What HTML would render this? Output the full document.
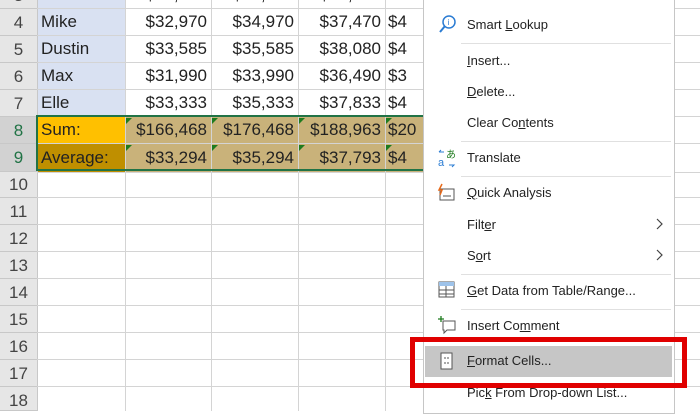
<!DOCTYPE html><html><head><style>
body{margin:0;width:700px;height:411px;overflow:hidden;background:#fff;font-family:"Liberation Sans",sans-serif;position:relative}
.a{position:absolute}
.rh{position:absolute;left:0;width:37px;background:#e6e6e6;color:#444;font-size:17px;text-align:center;border-bottom:1px solid #c8c8c8;box-sizing:border-box}
.hl{position:absolute;height:1px;background:#d4d4d4;left:37px;width:663px}
.vl{position:absolute;width:1px;background:#d4d4d4;top:0;height:411px}
.c{position:absolute;font-size:17px;color:#222;text-align:right;box-sizing:border-box;padding-right:4px;line-height:27px}
.m{position:absolute;left:467px;font-size:13px;color:#222}
.sep{position:absolute;left:461px;width:210px;height:1px;background:#e0e0e0}
.tri{position:absolute;width:0;height:0;border-top:6px solid #1e7b1e;border-right:6px solid transparent}
</style></head><body>
<div class="a" style="left:37px;top:0;width:88px;height:116px;background:#d9e1f2"></div>
<div class="a" style="left:37px;top:116px;width:88px;height:27px;background:#ffc000"></div>
<div class="a" style="left:37px;top:143px;width:88px;height:29px;background:#bf8f00"></div>
<div class="a" style="left:125px;top:116px;width:300px;height:56px;background:#c9b27a"></div>
<div class="vl" style="left:125px"></div><div class="vl" style="left:211px"></div><div class="vl" style="left:298px"></div><div class="vl" style="left:385px"></div><div class="vl" style="left:37px;background:#c8c8c8"></div>
<div class="hl" style="top:8px"></div><div class="hl" style="top:35px"></div><div class="hl" style="top:62px"></div><div class="hl" style="top:89px"></div><div class="hl" style="top:116px"></div><div class="hl" style="top:143px"></div><div class="hl" style="top:172px"></div><div class="hl" style="top:197px"></div><div class="hl" style="top:224px"></div><div class="hl" style="top:251px"></div><div class="hl" style="top:278px"></div><div class="hl" style="top:305px"></div><div class="hl" style="top:332px"></div><div class="hl" style="top:359px"></div><div class="hl" style="top:386px"></div>
<div class="rh" style="top:-18px;height:27px;line-height:27px">3</div>
<div class="rh" style="top:9px;height:27px;line-height:27px">4</div>
<div class="rh" style="top:36px;height:27px;line-height:27px">5</div>
<div class="rh" style="top:63px;height:27px;line-height:27px">6</div>
<div class="rh" style="top:90px;height:27px;line-height:27px">7</div>
<div class="rh" style="top:117px;height:27px;line-height:27px;background:#d2d2d2;color:#217346">8</div>
<div class="rh" style="top:144px;height:28px;line-height:28px;background:#d2d2d2;color:#217346">9</div>
<div class="rh" style="top:172px;height:26px;line-height:26px">10</div>
<div class="rh" style="top:198px;height:27px;line-height:27px">11</div>
<div class="rh" style="top:225px;height:27px;line-height:27px">12</div>
<div class="rh" style="top:252px;height:27px;line-height:27px">13</div>
<div class="rh" style="top:279px;height:27px;line-height:27px">14</div>
<div class="rh" style="top:306px;height:27px;line-height:27px">15</div>
<div class="rh" style="top:333px;height:27px;line-height:27px">16</div>
<div class="rh" style="top:360px;height:27px;line-height:27px">17</div>
<div class="rh" style="top:387px;height:24px;line-height:27px">18</div>
<div class="c" style="left:37px;top:-19px;width:88px;text-align:left;padding-left:4px">Will</div>
<div class="c" style="left:37px;top:8px;width:88px;text-align:left;padding-left:4px">Mike</div>
<div class="c" style="left:37px;top:35px;width:88px;text-align:left;padding-left:4px">Dustin</div>
<div class="c" style="left:37px;top:62px;width:88px;text-align:left;padding-left:4px">Max</div>
<div class="c" style="left:37px;top:89px;width:88px;text-align:left;padding-left:4px">Elle</div>
<div class="c" style="left:37px;top:116px;width:88px;text-align:left;padding-left:4px">Sum:</div>
<div class="c" style="left:37px;top:144px;width:88px;text-align:left;padding-left:4px">Average:</div>
<div class="c" style="left:125px;top:-19px;width:86px">$34,990</div><div class="c" style="left:211px;top:-19px;width:87px">$36,990</div><div class="c" style="left:298px;top:-19px;width:87px">$39,690</div>
<div class="c" style="left:125px;top:8px;width:86px">$32,970</div><div class="c" style="left:211px;top:8px;width:87px">$34,970</div><div class="c" style="left:298px;top:8px;width:87px">$37,470</div><div class="c" style="left:385px;top:8px;text-align:left;padding-left:3px">$4</div>
<div class="c" style="left:125px;top:35px;width:86px">$33,585</div><div class="c" style="left:211px;top:35px;width:87px">$35,585</div><div class="c" style="left:298px;top:35px;width:87px">$38,080</div><div class="c" style="left:385px;top:35px;text-align:left;padding-left:3px">$4</div>
<div class="c" style="left:125px;top:62px;width:86px">$31,990</div><div class="c" style="left:211px;top:62px;width:87px">$33,990</div><div class="c" style="left:298px;top:62px;width:87px">$36,490</div><div class="c" style="left:385px;top:62px;text-align:left;padding-left:3px">$3</div>
<div class="c" style="left:125px;top:89px;width:86px">$33,333</div><div class="c" style="left:211px;top:89px;width:87px">$35,333</div><div class="c" style="left:298px;top:89px;width:87px">$37,833</div><div class="c" style="left:385px;top:89px;text-align:left;padding-left:3px">$4</div>
<div class="c" style="left:125px;top:116px;width:86px">$166,468</div><div class="c" style="left:211px;top:116px;width:87px">$176,468</div><div class="c" style="left:298px;top:116px;width:87px">$188,963</div><div class="c" style="left:385px;top:116px;text-align:left;padding-left:3px">$20</div>
<div class="c" style="left:125px;top:144px;width:86px">$33,294</div><div class="c" style="left:211px;top:144px;width:87px">$35,294</div><div class="c" style="left:298px;top:144px;width:87px">$37,793</div><div class="c" style="left:385px;top:144px;text-align:left;padding-left:3px">$4</div>
<div class="tri" style="left:126px;top:118px"></div><div class="tri" style="left:212px;top:118px"></div><div class="tri" style="left:299px;top:118px"></div><div class="tri" style="left:386px;top:118px"></div>
<div class="tri" style="left:126px;top:145px"></div><div class="tri" style="left:212px;top:145px"></div><div class="tri" style="left:299px;top:145px"></div><div class="tri" style="left:386px;top:145px"></div>
<div class="a" style="left:36px;top:115px;width:400px;height:56px;border:2px solid #217346;box-sizing:border-box"></div>
<div class="a" style="left:423px;top:-1px;width:250px;height:413px;background:#fff;border:1px solid #c6c6c6"></div>
<svg class="a" style="left:438px;top:14px" width="20" height="20"><circle cx="11" cy="8" r="6" fill="none" stroke="#2b7cd3" stroke-width="1.5"/><line x1="7" y1="12" x2="2" y2="18" stroke="#2b7cd3" stroke-width="2"/><text x="9.5" y="11" font-size="8" fill="#2b7cd3">i</text></svg>
<div class="m" style="top:17px">Smart <u>L</u>ookup</div>
<div class="sep" style="top:43px"></div>
<div class="m" style="top:53px"><u>I</u>nsert...</div>
<div class="m" style="top:84px"><u>D</u>elete...</div>
<div class="m" style="top:115px">Clear Co<u>n</u>tents</div>
<div class="sep" style="top:141px"></div>
<svg class="a" style="left:437px;top:148px" width="20" height="20"><text x="1" y="18" font-size="11" fill="#2b7cd3">a</text><text x="9" y="10" font-size="10" fill="#1e7b1e">あ</text><path d="M2 4h5M2 4l2-2M12 17h5l-2 2" stroke="#2b7cd3" fill="none"/></svg>
<div class="m" style="top:150px">Translate</div>
<div class="sep" style="top:176px"></div>
<svg class="a" style="left:437px;top:183px" width="20" height="20"><rect x="3" y="6" width="14" height="11" fill="none" stroke="#555"/><path d="M6 13h8" stroke="#555"/><path d="M5 1l-3 6h3l-2 5" stroke="#e86a1a" fill="none" stroke-width="1.5"/></svg>
<div class="m" style="top:185px"><u>Q</u>uick Analysis</div>
<div class="m" style="top:217px">Filt<u>e</u>r</div>
<svg class="a" style="left:656px;top:218px" width="8" height="12"><path d="M1 1l5 5-5 5" stroke="#444" fill="none" stroke-width="1.2"/></svg>
<div class="m" style="top:248px">S<u>o</u>rt</div>
<svg class="a" style="left:656px;top:249px" width="8" height="12"><path d="M1 1l5 5-5 5" stroke="#444" fill="none" stroke-width="1.2"/></svg>
<div class="sep" style="top:274px"></div>
<svg class="a" style="left:438px;top:281px" width="18" height="18"><rect x="1" y="1" width="15" height="15" fill="none" stroke="#555"/><rect x="1" y="1" width="15" height="4" fill="#9ec3ea"/><path d="M1 9h15M1 13h15M8 5v11" stroke="#555"/></svg>
<div class="m" style="top:283px"><u>G</u>et Data from Table/Range...</div>
<div class="sep" style="top:309px"></div>
<svg class="a" style="left:437px;top:315px" width="20" height="20"><path d="M6 6h12v9H10l-3 3v-3H6z" fill="none" stroke="#555"/><path d="M4 1v6M1 4h6" stroke="#1e7b1e" stroke-width="1.3"/></svg>
<div class="m" style="top:318px">Insert Co<u>m</u>ment</div>
<div class="a" style="left:425px;top:346px;width:247px;height:31px;background:#c6c6c6"></div>
<svg class="a" style="left:440px;top:352px" width="14" height="18"><rect x="1" y="1" width="11" height="16" fill="#fff" stroke="#555"/><path d="M4 6h2M7 6h2M4 11h2M7 11h2" stroke="#555"/></svg>
<div class="m" style="top:353px"><u>F</u>ormat Cells...</div>
<div class="m" style="top:385px">Pic<u>k</u> From Drop-down List...</div>
<div class="a" style="left:410px;top:337px;width:277px;height:51px;border:5px solid #e00000;box-sizing:border-box"></div>
</body></html>
